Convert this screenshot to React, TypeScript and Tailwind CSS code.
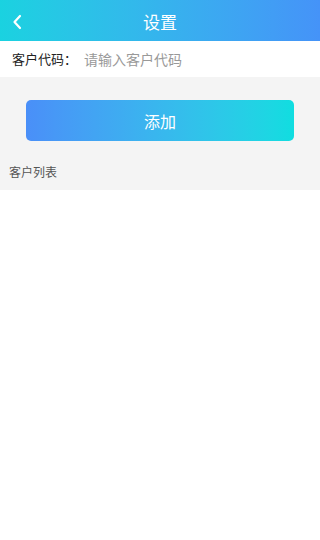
import React from 'react';

const font = { fontFamily: '"Noto Sans CJK SC", "Noto Sans", sans-serif' };

export default function App() {
  return (
    <div className="min-h-[540px] w-[320px] bg-white" style={font}>
      {/* Header */}
      <div className="relative flex h-[41px] items-center justify-center bg-gradient-to-r from-[#1ad2e0] to-[#4593f8]">
        <button className="absolute left-[10px] top-[12px] flex h-[20px] w-[14px] items-center justify-center">
          <svg width="10" height="16" viewBox="0 0 10 16" fill="none">
            <path d="M8 2L2.5 8L8 14" stroke="white" strokeWidth="2.2" strokeLinecap="round" strokeLinejoin="round" />
          </svg>
        </button>
        <h1 className="pt-[2px] text-[17px] font-normal leading-none text-white">设置</h1>
      </div>

      {/* Input row */}
      <div className="flex h-[36px] items-center bg-white px-[12px]">
        <span className="w-[72px] text-[13px] text-[#222]">客户代码：</span>
        <input
          className="flex-1 bg-transparent text-[14px] text-[#333] outline-none placeholder:text-[#999]"
          placeholder="请输入客户代码"
          style={font}
        />
      </div>

      {/* Gray section */}
      <div className="bg-[#f4f4f4] pb-[8px] pt-[23px]">
        <div className="px-[26px]">
          <button className="flex h-[41px] w-full items-center justify-center rounded-[5px] bg-gradient-to-r from-[#4a8ff8] to-[#10dde0] text-[16px] text-white">
            添加
          </button>
        </div>
        <div className="px-[9px] pt-[21px] text-[12px] leading-[20px] text-[#555]">客户列表</div>
      </div>
    </div>
  );
}
